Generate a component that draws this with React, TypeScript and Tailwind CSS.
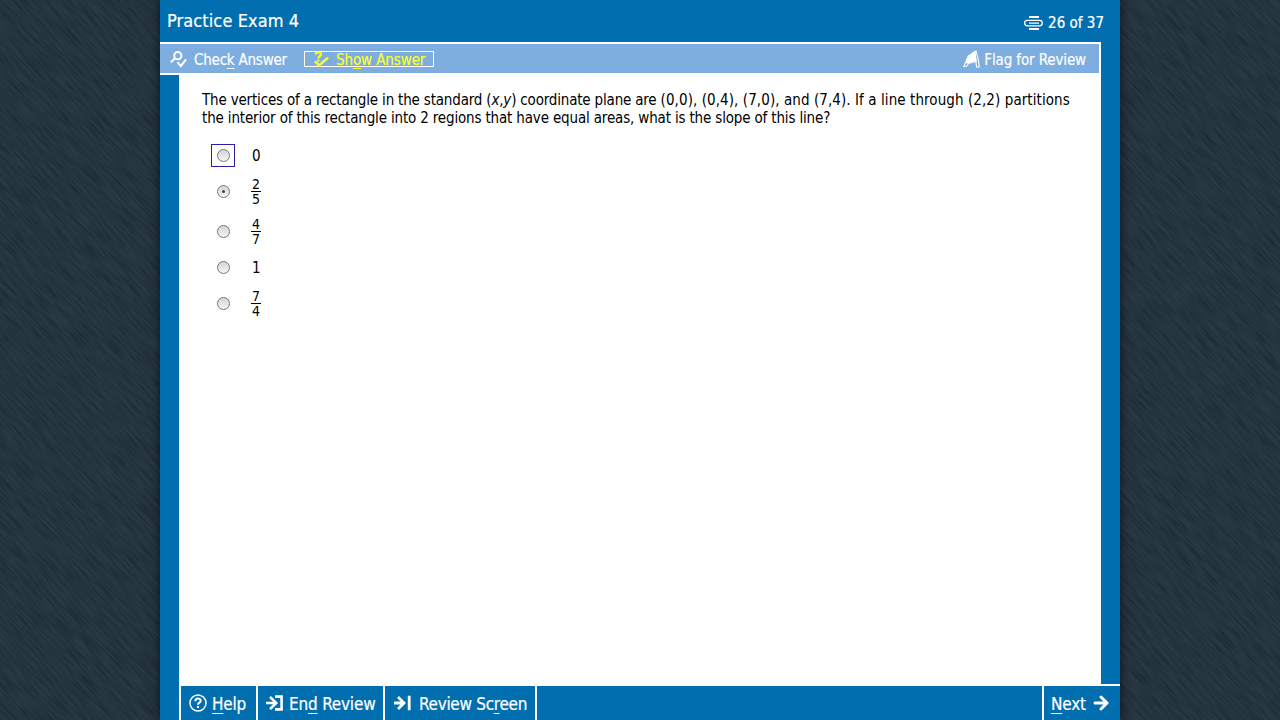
import type { ReactNode } from 'react';

const choices: { value: ReactNode; height: string; checked?: boolean; focused?: boolean }[] = [
  { value: '0', height: 'h-[32px]', focused: true },
  { value: <Fraction top="2" bottom="5" />, height: 'h-[40px]', checked: true },
  { value: <Fraction top="4" bottom="7" />, height: 'h-[40px]' },
  { value: '1', height: 'h-[32px]' },
  { value: <Fraction top="7" bottom="4" />, height: 'h-[40px]' },
];

function Fraction({ top, bottom }: { top: string; bottom: string }) {
  return (
    <span className="-ml-px -mt-[2px] flex w-[10px] flex-col items-center text-[14px] leading-[12px]">
      <span>{top}</span>
      <span className="mt-px h-px w-[10px] bg-black" />
      <span className="pt-px">{bottom}</span>
    </span>
  );
}

function Key({ children }: { children: string }) {
  return <span className="underline decoration-1 underline-offset-[3px]">{children}</span>;
}

function Radio({ checked, focused }: { checked?: boolean; focused?: boolean }) {
  return (
    <span className={`flex h-[23px] w-[24px] items-center justify-center border ${focused ? 'border-[#2a20a8]' : 'border-transparent'}`}>
      <span className="flex h-[13px] w-[13px] items-center justify-center rounded-full border border-[#777] bg-gradient-to-b from-[#d4d4d4] to-[#f6f6f6]">
        {checked && <span className="h-[3px] w-[3px] rounded-full bg-[#404040]" />}
      </span>
    </span>
  );
}

function Backdrop() {
  return (
    <svg className="absolute inset-0 h-full w-full" viewBox="0 0 1280 720">
      <filter id="grain" x="0" y="0" width="100%" height="100%" colorInterpolationFilters="sRGB">
        <feTurbulence type="fractalNoise" baseFrequency="0.035 0.6" numOctaves="2" seed="8" />
        <feColorMatrix values="0 0 0 0 0.04  0 0 0 0 0.09  0 0 0 0 0.13  0.95 0 0 0 -0.33" />
      </filter>
      <rect width="1280" height="720" fill="#293944" />
      <rect x="-400" y="-800" width="2200" height="2200" filter="url(#grain)" transform="rotate(47 640 360)" />
    </svg>
  );
}

export default function App() {
  return (
    <div className="relative h-[720px] w-[1280px] overflow-hidden bg-[#25343f] font-['DejaVu_Sans_Condensed','DejaVu_Sans',sans-serif] [font-stretch:condensed]">
      <Backdrop />
      <div className="relative mx-auto flex h-full w-[960px] flex-col bg-[#006eaf] shadow-[0_0_10px_#0b151d]">
        {/* Title bar */}
        <header className="flex h-[42px] shrink-0 justify-between pl-[7px] pr-[16px] text-white [-webkit-text-stroke:0.2px]">
          <h1 className="whitespace-nowrap pt-[9px] text-[18px] leading-[24px] tracking-[0.1px]">Practice Exam 4</h1>
          <div className="flex items-center gap-[5px] whitespace-nowrap pt-[4px] text-[15px]">
            <svg width="19" height="14" viewBox="0 0 19 14" fill="none" stroke="currentColor">
              <path d="M5 1h10M5 13h10" strokeWidth="1.8" />
              <path d="M14 9.8H3.3a2.6 2.6 0 0 1 0-5.4h12.3a2.6 2.6 0 0 1 0 5.4H14M15 7.1H5" strokeWidth="1.3" />
            </svg>
            <span>26 of 37</span>
          </div>
        </header>

        {/* Toolbar */}
        <div className="flex h-[33px] w-[941px] shrink-0 items-center whitespace-nowrap border-y-2 border-r-2 border-white bg-[#7eaee0] text-[15px] leading-[18px] text-white [-webkit-text-stroke:0.15px]">
          <div className="ml-[10px] flex h-[16px] w-[134px] items-center gap-[7px] tracking-[-0.22px]">
            <svg className="mt-px" width="17" height="17" viewBox="0 0 17 17" fill="none" stroke="currentColor" strokeWidth="2">
              <circle cx="7.8" cy="4.7" r="3.6" />
              <path d="M5.2 7.2 .8 11.2M7.5 11.2l3.3 4L16 8.4" />
            </svg>
            <span className="pt-[3px]">Chec<Key>k</Key> Answer</span>
          </div>
          <div className="mt-px flex h-[16px] w-[130px] items-center gap-[6px] border border-white pl-[8px] tracking-[-0.1px] text-[#ffff20]">
            <svg width="17" height="16" viewBox="0 0 17 16" fill="none" stroke="currentColor" strokeWidth="2.3">
              <path d="M3 3.5C3 .3 8 .4 8 3.3c0 2-2.7 2-2.7 4.2M5.3 8.6v2M1.8 10.2l4.3 4.2 9-7.8" />
            </svg>
            <span className="pt-px">Sh<Key>o</Key>w Answer</span>
          </div>
          <div className="ml-auto mr-[13px] flex items-center gap-[4px] tracking-[-0.12px]">
            <svg width="17" height="18" viewBox="0 0 17 18" fill="none" stroke="currentColor">
              <path d="M5.5 5.5C8 5 9 2 12 2l1.2 10c-3-.8-4.5 1.5-7 1L3.5 13Z" fill="currentColor" />
              <path d="M11 2.3 13 1c1 5 3.3 10 3.2 16h-2.7L12 3M5.5 5.5.8 16.5h2.4L6 13" strokeWidth="1.1" />
            </svg>
            <span className="pt-[3px]">Flag for Review</span>
          </div>
        </div>

        {/* Question */}
        <div className="flex min-h-0 flex-1">
          <main className="ml-[19px] w-[922px] bg-white pl-[23px] pt-[16px] text-[15px] leading-[18px] text-black">
            <p className="whitespace-nowrap tracking-[-0.16px]">
              <span className="tracking-[-0.18px]">
                The vertices of a rectangle in the standard (<i>x</i>,<i>y</i>) coordinate plane are{' '}
              </span>
              <span className="tracking-[0.08px]">(0,0), (0,4), (7,0), and (7,4). If a line through (2,2) partitions</span>
              <br />
              the interior of this rectangle into 2 regions that have equal areas, what is the slope of this line?
            </p>
            <div className="ml-[9px] mt-[12px]">
              {choices.map((choice, index) => (
                <label key={index} className={`flex items-center gap-[17px] ${choice.height}`}>
                  <Radio checked={choice.checked} focused={choice.focused} />
                  <span className="relative top-px">{choice.value}</span>
                </label>
              ))}
            </div>
          </main>
          <div className="flex-1 border-b-2 border-white" />
        </div>

        {/* Navigation */}
        <footer className="ml-[19px] flex h-[34px] shrink-0 whitespace-nowrap text-[17px] leading-[20px] text-white [-webkit-text-stroke:0.2px]">
          <div className="flex w-[77px] items-center gap-[5px] border-l-2 border-white pl-[8px] tracking-[-0.2px]">
            <svg width="18" height="18" viewBox="0 0 18 18" fill="none" stroke="currentColor">
              <circle cx="9" cy="9" r="8" strokeWidth="1.5" />
              <path d="M6.3 7.2c0-3.7 5.4-3.5 5.4-.5 0 2-2.7 1.9-2.7 4M9 12v2" strokeWidth="2" />
            </svg>
            <span className="pt-px"><Key>H</Key>elp</span>
          </div>
          <div className="flex w-[127px] items-center gap-[6px] border-l-2 border-white pl-[8px] tracking-[-0.2px]">
            <svg width="17" height="16" viewBox="0 0 17 16" fill="none" stroke="currentColor" strokeWidth="2.6">
              <path d="M0 8h10M4 1.8 10.2 8 4 14.2M9 1.6h6.6v12.8H9" />
            </svg>
            <span className="pt-px">En<Key>d</Key> Review</span>
          </div>
          <div className="flex w-[154px] items-center gap-[8px] border-x-2 border-white pl-[9px] tracking-[-0.3px]">
            <svg width="17" height="16" viewBox="0 0 17 16" fill="none" stroke="currentColor" strokeWidth="2.8">
              <path d="M0 8h10M4 2l6 6-6 6M15.2.8v14.4" />
            </svg>
            <span className="pt-px">Review Sc<Key>r</Key>een</span>
          </div>
          <div className="ml-auto flex w-[78px] items-center gap-[7px] border-l-2 border-white pl-[7px] tracking-[-0.2px]">
            <span className="pt-px"><Key>N</Key>ext</span>
            <svg width="16" height="16" viewBox="0 0 16 16" fill="none" stroke="currentColor" strokeWidth="3" strokeLinecap="round" strokeLinejoin="round">
              <path d="M2 8h12M8 2l6 6-6 6" />
            </svg>
          </div>
        </footer>
      </div>
    </div>
  );
}
